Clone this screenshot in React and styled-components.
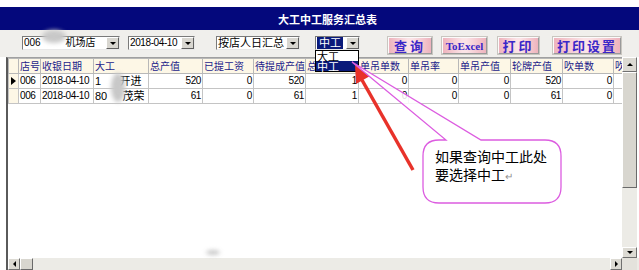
import React from 'react';
import styled, { createGlobalStyle } from 'styled-components';

const GlobalStyle = createGlobalStyle`
  html, body { margin: 0; padding: 0; background: #fff; }
  body { font-family: "Liberation Sans", "Noto Sans CJK SC", sans-serif; }
`;

const columns = [
  { key: 'ind', title: '', width: 10 },
  { key: 'shop', title: '店号', width: 22 },
  { key: 'date', title: '收银日期', width: 53 },
  { key: 'big', title: '大工', width: 55 },
  { key: 'total', title: '总产值', width: 54, num: true },
  { key: 'paid', title: '已提工资', width: 51, num: true },
  { key: 'pending', title: '待提成产值', width: 52, num: true },
  { key: 'orders', title: '总单数', width: 53, num: true },
  { key: 'single', title: '单吊单数', width: 50, num: true },
  { key: 'rate', title: '单吊率', width: 50, num: true },
  { key: 'sval', title: '单吊产值', width: 52, num: true },
  { key: 'turn', title: '轮牌产值', width: 52, num: true },
  { key: 'blow', title: '吹单数', width: 51, num: true },
  { key: 'blow2', title: '吹', width: 9 },
];

const rows = [
  { shop: '006', date: '2018-04-10', big: '1      开进', total: 520, paid: 0, pending: 520, orders: 1, single: 0, rate: 0, sval: 0, turn: 520, blow: 0, current: true },
  { shop: '006', date: '2018-04-10', big: '80     茂荣', total: 61, paid: 0, pending: 61, orders: 1, single: 0, rate: 0, sval: 0, turn: 61, blow: 0 },
];

const Root = styled.div`
  position: relative;
  width: 639px;
  height: 270px;
  overflow: hidden;
  background: #fff;
  display: flex;
  flex-direction: column;
`;

const TitleBar = styled.div`
  margin-top: 7px;
  height: 23px;
  background: #04087c;
  color: #fff;
  font: bold 11px "Noto Sans CJK SC", sans-serif;
  display: flex;
  align-items: center;
  justify-content: center;
  padding-left: 16px;
`;

const Toolbar = styled.div`
  height: 27px;
  background: #f0efec;
  display: flex;
  align-items: flex-start;
  padding: 6px 0 0 22px;
  box-sizing: border-box;
`;

const Select = styled.div`
  width: ${(p) => p.$w}px;
  margin-left: ${(p) => p.$ml || 0}px;
  height: 14px;
  box-sizing: border-box;
  background: #fff;
  border: 1px solid;
  border-color: #7a7a7a #e8e8e8 #e8e8e8 #7a7a7a;
  display: flex;
  align-items: center;
  font-size: ${(p) => p.$fs || 10}px;
  font-family: "Liberation Sans", "Noto Sans CJK SC", sans-serif;
  letter-spacing: ${(p) => p.$ls || 0}px;
  color: #000;
  white-space: nowrap;
`;

const SelectText = styled.span`
  flex: 1;
  overflow: hidden;
  padding-left: 1px;
  line-height: 12px;
  ${(p) => p.$active && `
    flex: none;
    background: #0a1a7a;
    color: #fff;
    margin-left: 1px;
    padding: 0 2px;
  `}
`;

const SelectSpacer = styled.span`
  flex: 1;
`;

const DropBtn = styled.span`
  width: 13px;
  height: 12px;
  flex: none;
  box-sizing: border-box;
  background: #d8d6d0;
  border: 1px solid;
  border-color: #fff #606060 #606060 #fff;
  display: flex;
  align-items: center;
  justify-content: center;
  &::after {
    content: '';
    border-left: 3px solid transparent;
    border-right: 3px solid transparent;
    border-top: 3px solid #000;
  }
`;

const ActionButton = styled.button`
  margin-left: ${(p) => p.$ml}px;
  width: ${(p) => p.$w}px;
  height: 17px;
  margin-top: 1px;
  padding: 0;
  border: 1px solid;
  border-color: #fbfbfb #9a9a9a #9a9a9a #fbfbfb;
  outline: 1px solid #c9c6c0;
  background: linear-gradient(to right, #eeb3bd, #fbe3e6 45%, #fbe3e6 55%, #eeb3bd);
  color: #3a27c8;
  font: bold ${(p) => p.$fs || 13}px "Liberation Serif", "Noto Sans CJK SC", serif;
  letter-spacing: ${(p) => p.$ls || 0}px;
  display: flex;
  align-items: center;
  justify-content: center;
  white-space: nowrap;
`;

const GridArea = styled.div`
  display: flex;
  height: 201px;
  margin-left: 6px;
`;

const GridBody = styled.div`
  width: 616px;
  box-sizing: border-box;
  border-left: 2px solid #5a5a5a;
  border-top: 1px solid #a0a0a0;
  background: #fff;
  overflow: hidden;
`;

const Table = styled.table`
  border-collapse: collapse;
  table-layout: fixed;
  width: 614px;
  font-size: 10px;
`;

const HeadCell = styled.th`
  height: 14px;
  padding: 0 1px;
  background: #fdf7e6;
  border: 1px solid #b8b8b8;
  color: #1c1c8a;
  font: normal 10px "Noto Sans CJK SC", sans-serif;
  text-align: left;
  white-space: nowrap;
  overflow: hidden;
  line-height: 12px;
`;

const Cell = styled.td`
  height: 14px;
  padding: 0 1px;
  border: 1px solid #c4c4c4;
  color: #000;
  font-family: "Liberation Sans", "Noto Sans CJK SC", sans-serif;
  font-size: ${(p) => (p.$cjk ? 11 : 10)}px;
  letter-spacing: ${(p) => (p.$cjk ? 0 : -0.4)}px;
  text-align: ${(p) => (p.$num ? 'right' : 'left')};
  white-space: pre;
  overflow: hidden;
  line-height: 12px;
`;

const Indicator = styled.td`
  border: 1px solid #c4c4c4;
  background: #fdf7e6;
  padding: 0;
  position: relative;
  ${(p) => p.$current && `
    &::after {
      content: '';
      position: absolute;
      left: 2px;
      top: 3px;
      border-top: 4px solid transparent;
      border-bottom: 4px solid transparent;
      border-left: 5px solid #000;
    }
  `}
`;

const VScroll = styled.div`
  width: 15px;
  display: flex;
  flex-direction: column;
  background: #ecebe6;
`;

const ArrowBox = styled.div`
  width: ${(p) => p.$w || 15}px;
  height: ${(p) => p.$h || 15}px;
  box-sizing: border-box;
  background: #dcdad3;
  border: 1px solid;
  border-color: #fff #707070 #707070 #fff;
  display: flex;
  align-items: center;
  justify-content: center;
  &::after {
    content: '';
    ${(p) => p.$dir === 'up' && 'border-left: 3px solid transparent; border-right: 3px solid transparent; border-bottom: 3px solid #000;'}
    ${(p) => p.$dir === 'down' && 'border-left: 3px solid transparent; border-right: 3px solid transparent; border-top: 3px solid #000;'}
    ${(p) => p.$dir === 'left' && 'border-top: 3px solid transparent; border-bottom: 3px solid transparent; border-right: 3px solid #000;'}
    ${(p) => p.$dir === 'right' && 'border-top: 3px solid transparent; border-bottom: 3px solid transparent; border-left: 3px solid #000;'}
  }
`;

const Thumb = styled.div`
  box-sizing: border-box;
  background: #d8d6cf;
  border: 1px solid;
  border-color: #fff #6a6a6a #6a6a6a #fff;
  ${(p) => (p.$vertical ? 'height: 116px;' : 'width: 13px; height: 12px;')}
`;

const Track = styled.div`
  flex: 1;
`;

const HScrollRow = styled.div`
  display: flex;
  height: 12px;
  margin-left: 6px;
  background: #ecebe6;
`;

const HScrollTrack = styled.div`
  width: 616px;
  box-sizing: border-box;
  border-left: 2px solid #5a5a5a;
  display: flex;
`;

const Corner = styled.div`
  width: 15px;
  background: #e4e2dc;
`;

const DropList = styled.div`
  position: absolute;
  left: 315px;
  top: 50px;
  width: 44px;
  box-sizing: border-box;
  border: 1px solid #000;
  background: #fff;
  font: 11px "Noto Sans CJK SC", sans-serif;
`;

const DropItem = styled.div`
  height: 10px;
  line-height: 10px;
  padding-left: 1px;
  ${(p) => p.$selected && 'background: #0a1a7a; color: #fff;'}
`;

const Blob = styled.div`
  position: absolute;
  left: ${(p) => p.$x}px;
  top: ${(p) => p.$y}px;
  width: ${(p) => p.$w}px;
  height: ${(p) => p.$h}px;
  border-radius: 50%;
  background: #c8c8c8;
  filter: blur(2px);
`;

const Overlay = styled.svg`
  position: absolute;
  left: 0;
  top: 0;
  pointer-events: none;
`;

const BubbleText = styled.div`
  position: absolute;
  left: 435px;
  top: 147px;
  font: 14px/18px "Noto Sans CJK SC", sans-serif;
  color: #000;
`;

const ReturnMark = styled.span`
  color: #909090;
  font-size: 10px;
`;

const TextBlob = styled.span`
  display: inline-block;
  width: 22px;
`;

export default function App() {
  return (
    <>
      <GlobalStyle />
      <Root>
        <TitleBar>大工中工服务汇总表</TitleBar>
        <Toolbar>
          <Select $w={98}>
            <SelectText>006 <TextBlob />机场店</SelectText>
            <DropBtn />
          </Select>
          <Select $w={67} $ml={8} $ls={-0.4}>
            <SelectText>2018-04-10</SelectText>
            <DropBtn />
          </Select>
          <Select $w={84} $ml={21} $fs={11}>
            <SelectText>按店人日汇总</SelectText>
            <DropBtn />
          </Select>
          <Select $w={45} $ml={15} $fs={11}>
            <SelectText $active>中工</SelectText>
            <SelectSpacer />
            <DropBtn />
          </Select>
          <ActionButton $ml={28} $w={44} $ls={3}>查询</ActionButton>
          <ActionButton $ml={10} $w={45} $fs={11}>ToExcel</ActionButton>
          <ActionButton $ml={11} $w={41} $ls={3}>打印</ActionButton>
          <ActionButton $ml={14} $w={68} $ls={2}>打印设置</ActionButton>
        </Toolbar>
        <GridArea>
          <GridBody>
            <Table>
              <colgroup>
                {columns.map((c) => (
                  <col key={c.key} style={{ width: c.width }} />
                ))}
              </colgroup>
              <thead>
                <tr>
                  {columns.map((c) => (
                    <HeadCell key={c.key}>{c.title}</HeadCell>
                  ))}
                </tr>
              </thead>
              <tbody>
                {rows.map((r, i) => (
                  <tr key={i}>
                    <Indicator $current={r.current} />
                    {columns.slice(1).map((c) => (
                      <Cell key={c.key} $num={c.num} $cjk={c.key === 'big'}>
                        {r[c.key] ?? ''}
                      </Cell>
                    ))}
                  </tr>
                ))}
              </tbody>
            </Table>
          </GridBody>
          <VScroll>
            <ArrowBox $dir="up" />
            <Thumb $vertical />
            <Track />
            <ArrowBox $dir="down" $h={11} />
          </VScroll>
        </GridArea>
        <HScrollRow>
          <HScrollTrack>
            <ArrowBox $dir="left" $w={12} $h={12} />
            <Thumb />
            <Track />
            <ArrowBox $dir="right" $w={12} $h={12} />
          </HScrollTrack>
          <Corner />
        </HScrollRow>

        <Blob $x={42} $y={30} $w={24} $h={13} />
        <Blob $x={111} $y={73} $w={14} $h={29} />
        <Blob $x={206} $y={250} $w={14} $h={5} />

        <DropList>
          <DropItem>大工</DropItem>
          <DropItem $selected>中工</DropItem>
        </DropList>

        <Overlay width="639" height="270" viewBox="0 0 639 270">
          <line x1="413" y1="170" x2="362" y2="80" stroke="#e8322a" strokeWidth="3.5" />
          <polygon points="355,65 370,76 356,84" fill="#e8322a" />
          <path
            d="M 439 140 L 446 140 L 352 62 L 481 140 L 545 140 Q 561 140 561 156 L 561 187 Q 561 203 545 203 L 439 203 Q 423 203 423 187 L 423 156 Q 423 140 439 140 Z"
            fill="#fff"
            fillOpacity="0.85"
            stroke="#dc5ce0"
            strokeWidth="1.3"
          />
        </Overlay>
        <BubbleText>
          如果查询中工此处
          <br />
          要选择中工<ReturnMark>↵</ReturnMark>
        </BubbleText>
      </Root>
    </>
  );
}
